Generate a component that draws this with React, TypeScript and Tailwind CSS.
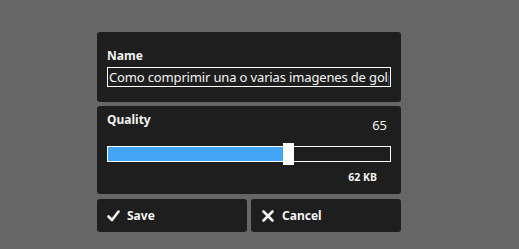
import { useState } from 'react';

function CheckIcon() {
  return (
    <svg width="13" height="12" viewBox="0 0 13 12" className="shrink-0">
      <path d="M1.5 6.5 L5 10 L11.5 1.5" fill="none" stroke="#f2f2f2" strokeWidth="2.6" strokeLinecap="round" strokeLinejoin="round" />
    </svg>
  );
}

function CloseIcon() {
  return (
    <svg width="12" height="12" viewBox="0 0 12 12" className="shrink-0">
      <path d="M1.5 1.5 L10.5 10.5 M10.5 1.5 L1.5 10.5" fill="none" stroke="#f2f2f2" strokeWidth="2.6" strokeLinecap="round" />
    </svg>
  );
}

export default function App() {
  const [name, setName] = useState('Como comprimir una o varias imagenes de golpe');
  const quality = 65;

  return (
    <div className="min-h-[249px] w-full bg-[#666666] pt-[32px] font-['Noto_Sans',sans-serif] text-[#f2f2f2]">
      <div className="ml-[97px] flex w-[304px] flex-col gap-[4px]">
        {/* Name */}
        <div className="flex h-[70px] flex-col rounded-[3px] bg-[#1e1e1e] px-[10px] pt-[16px]">
          <label className="text-[12px] font-bold leading-[16px]">Name</label>
          <input
            value={name}
            onChange={(e) => setName(e.target.value)}
            className="mt-[3px] h-[20px] w-full border border-white bg-[#1e1e1e] px-[1px] text-[13px] leading-[18px] tracking-[-0.15px] text-[#f5f5f5] outline-none"
          />
        </div>

        {/* Quality */}
        <div className="flex h-[88px] flex-col rounded-[3px] bg-[#1e1e1e] px-[10px] pt-[6px]">
          <div className="flex items-start justify-between pr-[4px]">
            <span className="text-[12px] font-bold leading-[16px]">Quality</span>
            <span className="mt-[4px] text-[13px] leading-[18px]">{quality}</span>
          </div>
          <div className="relative mt-[12px] h-[16px] w-full border border-white bg-[#1e1e1e]">
            <div
              className="h-full bg-[#42a5f5]"
              style={{ width: `calc(${quality}% - ${quality * 0.11}px)` }}
            />
            <div
              className="absolute top-[-4px] h-[22px] w-[11px] bg-white"
              style={{ left: `calc(${quality}% - ${quality * 0.11}px - 1px)` }}
            />
          </div>
          <div className="mt-[8px] pr-[14px] text-right text-[10.5px] font-bold leading-[14px]">62 KB</div>
        </div>

        {/* Buttons */}
        <div className="mt-[1px] grid grid-cols-2 gap-[4px]">
          <button className="flex h-[33px] items-center gap-[7px] rounded-[3px] bg-[#1e1e1e] pl-[10px] text-[12px] font-bold text-[#f2f2f2]">
            <CheckIcon />
            Save
          </button>
          <button className="flex h-[33px] items-center gap-[8px] rounded-[3px] bg-[#1e1e1e] pl-[11px] text-[12px] font-bold text-[#f2f2f2]">
            <CloseIcon />
            Cancel
          </button>
        </div>
      </div>
    </div>
  );
}
